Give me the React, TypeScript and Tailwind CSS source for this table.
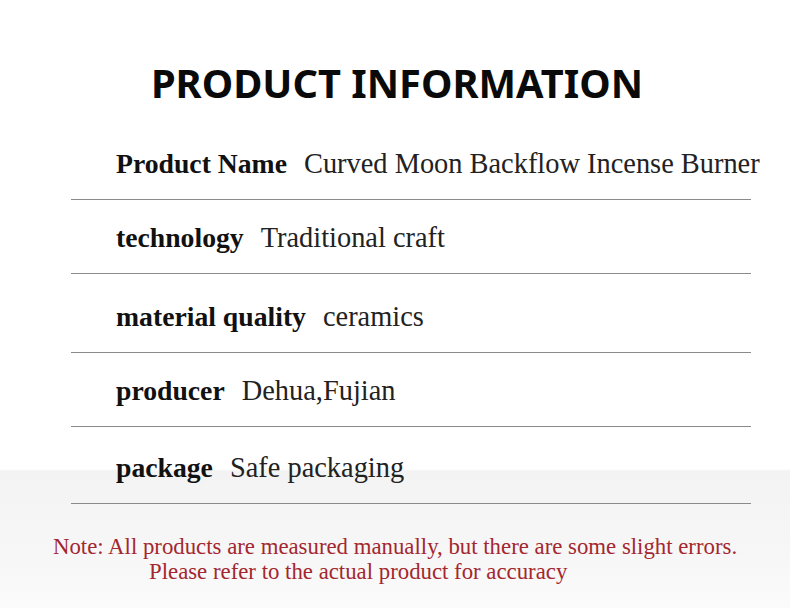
import React from "react";

const rows = [
  { label: "Product Name", value: "Curved Moon Backflow Incense Burner", pt: "pt-[39px]" },
  { label: "technology", value: "Traditional craft", pt: "pt-[22px]" },
  { label: "material quality", value: "ceramics", pt: "pt-[27px]" },
  { label: "producer", value: "Dehua,Fujian", pt: "pt-[22px]" },
  { label: "package", value: "Safe packaging", pt: "pt-[25px]" },
];

export default function App() {
  return (
    <div className="w-[790px] h-[608px] overflow-hidden bg-[linear-gradient(to_bottom,#ffffff_0px,#ffffff_469px,#f3f3f3_471px,#f7f7f7_560px,#fbfbfb_608px)]">
      <div className="pt-[57px] h-[109px] text-center font-['Noto_Sans',sans-serif] font-bold text-[39.8px] leading-[52px] text-[#0a0a0a] pl-[4px]">
        PRODUCT INFORMATION
      </div>
      <div className="ml-[71px] w-[680px] font-['Liberation_Serif',serif]">
        {rows.map((r) => (
          <div key={r.label} className={`${r.pt} pb-[19px] border-b border-[#8a8a8a] flex items-center pl-[45px] whitespace-nowrap`}>
            <span className="font-bold text-[27.7px] leading-[32px] text-[#111111]">{r.label}</span>
            <span className="ml-[17px] text-[28.4px] leading-[32px] text-[#222222]">{r.value}</span>
          </div>
        ))}
      </div>
      <div className="mt-[30px] font-['Liberation_Serif',serif] text-[22.8px] leading-[25px] text-[#a3272f] whitespace-nowrap">
        <div className="pl-[53px]">Note: All products are measured manually, but there are some slight errors.</div>
        <div className="pl-[149px]">Please refer to the actual product for accuracy</div>
      </div>
    </div>
  );
}
